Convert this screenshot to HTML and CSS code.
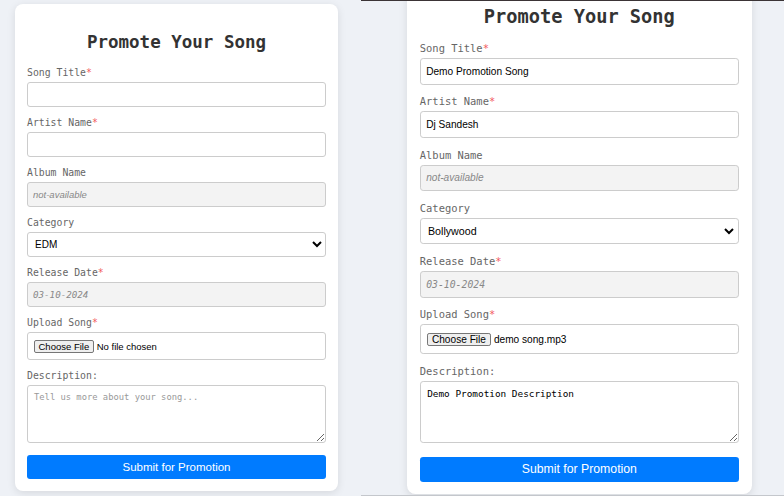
FILE: index.html
```html
<!DOCTYPE html>
<html lang="en">
<head>
<meta charset="utf-8">
<title>Promote Your Song</title>
<link rel="stylesheet" href="styles.css">
</head>
<body>
<div class="shot shot-left">
  <form class="card">
    <h2 class="title">Promote Your Song</h2>
    <div class="field">
      <label class="label">Song Title<span class="req">*</span></label>
      <input class="control" type="text">
    </div>
    <div class="field">
      <label class="label">Artist Name<span class="req">*</span></label>
      <input class="control" type="text">
    </div>
    <div class="field">
      <label class="label">Album Name</label>
      <input class="control" type="text" value="not-available" disabled>
    </div>
    <div class="field">
      <label class="label">Category</label>
      <select class="control select">
        <option>EDM</option>
        <option>Bollywood</option>
      </select>
    </div>
    <div class="field">
      <label class="label">Release Date<span class="req">*</span></label>
      <input class="control mono" type="text" value="03-10-2024" disabled>
    </div>
    <div class="field">
      <label class="label">Upload Song<span class="req">*</span></label>
      <div class="control file"><span class="file-btn">Choose File</span><span class="file-name">No file chosen</span></div>
    </div>
    <div class="field">
      <label class="label">Description:</label>
      <textarea class="control area" placeholder="Tell us more about your song..."></textarea>
    </div>
    <button class="submit" type="button">Submit for Promotion</button>
  </form>
</div>
<div class="shot shot-right">
  <form class="card">
    <h2 class="title">Promote Your Song</h2>
    <div class="field">
      <label class="label">Song Title<span class="req">*</span></label>
      <input class="control" type="text" value="Demo Promotion Song">
    </div>
    <div class="field">
      <label class="label">Artist Name<span class="req">*</span></label>
      <input class="control" type="text" value="Dj Sandesh">
    </div>
    <div class="field">
      <label class="label">Album Name</label>
      <input class="control" type="text" value="not-available" disabled>
    </div>
    <div class="field">
      <label class="label">Category</label>
      <select class="control select">
        <option>Bollywood</option>
        <option>EDM</option>
      </select>
    </div>
    <div class="field">
      <label class="label">Release Date<span class="req">*</span></label>
      <input class="control mono" type="text" value="03-10-2024" disabled>
    </div>
    <div class="field">
      <label class="label">Upload Song<span class="req">*</span></label>
      <div class="control file"><span class="file-btn">Choose File</span><span class="file-name">demo song.mp3</span></div>
    </div>
    <div class="field">
      <label class="label">Description:</label>
      <textarea class="control area">Demo Promotion Description</textarea>
    </div>
    <button class="submit" type="button">Submit for Promotion</button>
  </form>
</div>
</body>
</html>
```

FILE: styles.css
```css
* { box-sizing: border-box; }
html, body { margin: 0; padding: 0; }
body {
  display: flex;
  width: 784px;
  height: 496px;
  overflow: hidden;
  background: #eef1f6;
  font-family: "DejaVu Sans Mono", monospace;
}
.shot { height: 496px; }
.shot-left {
  width: 361px;
  flex: none;
  padding: 4px 0 0 15px;
}
.shot-right {
  flex: 1;
  display: flex;
  align-items: flex-end;
  padding: 0 0 1px 46px;
  background: #eef1f6;
  border-top: 1px solid #3b3436;
  border-bottom: 1px solid #c4c7cc;
  overflow: clip;
}
.card {
  display: flex;
  flex-direction: column;
  width: 323px;
  flex: none;
  background: #fff;
  border-radius: 8px;
  box-shadow: 0 2px 8px rgba(0, 0, 0, 0.1);
  padding: 12px;
}
.shot-right .card { zoom: 1.067; padding-bottom: 11px; }
.title {
  margin: 16px 0 14px;
  font-family: "DejaVu Sans Mono", monospace;
  font-weight: bold;
  font-size: 17.5px;
  line-height: 21px;
  text-align: center;
  color: #333;
}
.shot-right .title { margin-bottom: 13px; }
.field { margin-bottom: 10px; }
.label {
  display: block;
  font-size: 9.8px;
  line-height: 12px;
  color: #666;
  margin-bottom: 3px;
}
.req { color: #f25a60; }
.control {
  display: block;
  width: 100%;
  height: 25px;
  margin: 0;
  border: 1px solid #ccc;
  border-radius: 3px;
  padding: 0 5px;
  background: #fff;
  color: #000;
  font-family: "Liberation Sans", Arial, sans-serif;
  font-size: 9.5px;
  outline: none;
}
.control:disabled {
  background: #f3f3f3;
  color: #888;
  font-style: italic;
}
.control.mono {
  font-family: "DejaVu Sans Mono", monospace;
  font-size: 9.2px;
}
.select { padding: 0 3px; font-size: 10px; }
.file {
  display: flex;
  align-items: center;
  height: 28px;
  padding: 0 6px;
}
.file-btn {
  font-family: "Liberation Sans", Arial, sans-serif;
  font-size: 9.5px;
  line-height: 11px;
  background: #efefef;
  border: 1px solid #767676;
  border-radius: 2px;
  padding: 0 3.5px;
  margin-right: 3px;
  color: #000;
}
.file-name { line-height: 11px; }
.area {
  height: 58px;
  padding: 6px;
  font-family: "DejaVu Sans Mono", monospace;
  font-size: 8.8px;
  resize: both;
}
.area::placeholder { color: #999; }
.submit {
  display: block;
  width: 100%;
  height: 24px;
  margin-top: 2px;
  border: 0;
  border-radius: 3px;
  background: #007bff;
  color: #fff;
  font-family: "Liberation Sans", Arial, sans-serif;
  font-size: 11.5px;
  padding: 0;
}
.shot-right .submit { margin-top: 3px; }
```
